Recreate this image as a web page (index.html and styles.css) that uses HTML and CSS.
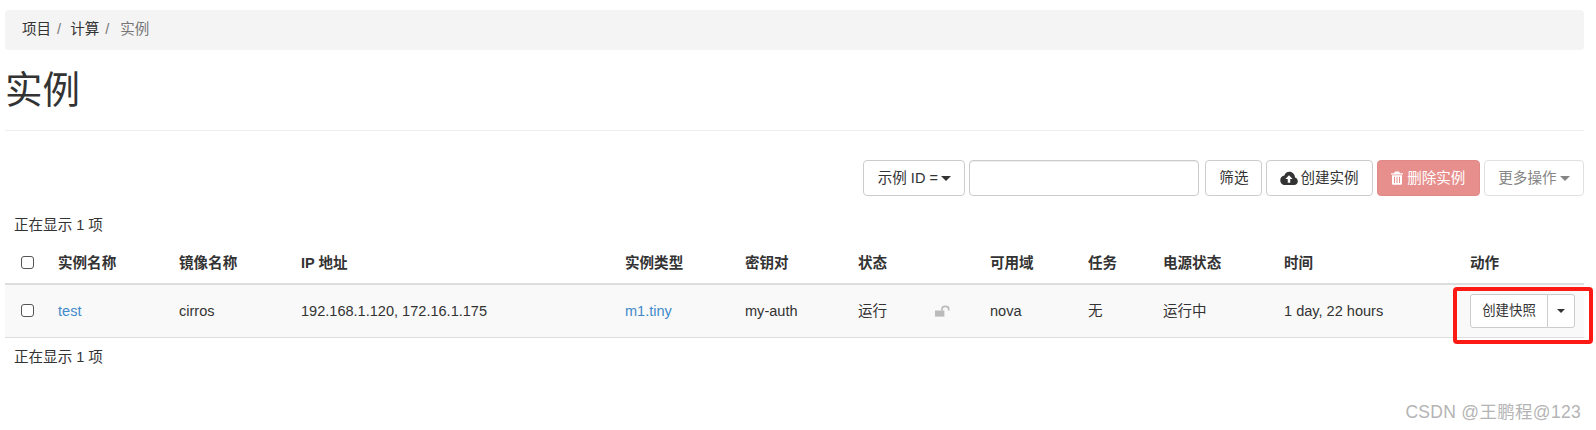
FILE: index.html
```html
<!DOCTYPE html>
<html lang="zh-CN">
<head>
<meta charset="utf-8">
<title>实例</title>
<link rel="stylesheet" href="styles.css">
</head>
<body>
<main class="page">
  <ol class="breadcrumb">
    <li class="crumb">项目<span class="sep">/</span></li>
    <li class="crumb">计算<span class="sep">/</span></li>
    <li class="crumb active">实例</li>
  </ol>
  <h1 class="title">实例</h1>
  <div class="toolbar">
    <button class="btn select-btn">示例 ID =<span class="caret"></span></button>
    <input class="search" type="text" aria-label="filter">
    <button class="btn">筛选</button>
    <button class="btn">
      <svg class="ico" viewBox="0 0 20 16" aria-hidden="true"><path fill="#333" fill-rule="evenodd" d="M10.500 0.500C7.600 0.500 5.500 2.300 4.900 4.800 2.300 5 0.300 7.100 0.300 9.900c0 3 2.300 5.300 5.200 5.300h10.100c2.400 0 4.200-1.900 4.200-4.200 0-2-1.300-3.600-3.100-4.100C16.500 3.300 13.900 0.500 10.500 0.500zM10 4.300l4 4.200h-2.600v4.200H8.600V8.500H6z"/></svg>创建实例
    </button>
    <button class="btn btn-danger">
      <svg class="ico trash" viewBox="0 0 12 14" aria-hidden="true"><path fill="#fff" fill-rule="evenodd" d="M4 0.500h4L9 2.200h3v1.300H0V2.200h3zM1 4.300h10v8.200c0 .8-.6 1.300-1.300 1.300H2.300C1.600 13.800 1 13.300 1 12.500zM3 5.800v6.300h1V5.800zM5.500 5.800v6.300h1V5.800zM8 5.800v6.300h1V5.800z"/></svg>删除实例
    </button>
    <button class="btn btn-off">更多操作<span class="caret"></span></button>
  </div>
  <p class="count count-top">正在显示 1 项</p>
  <table class="grid">
    <thead>
      <tr>
        <th class="c-check"><input type="checkbox" aria-label="all"></th>
        <th class="c-name">实例名称</th>
        <th class="c-image">镜像名称</th>
        <th class="c-ip">IP 地址</th>
        <th class="c-type">实例类型</th>
        <th class="c-key">密钥对</th>
        <th class="c-status">状态</th>
        <th class="c-lock"></th>
        <th class="c-az">可用域</th>
        <th class="c-task">任务</th>
        <th class="c-power">电源状态</th>
        <th class="c-time">时间</th>
        <th class="c-action">动作</th>
      </tr>
    </thead>
    <tbody>
      <tr>
        <td><input type="checkbox" aria-label="test"></td>
        <td><a href="#">test</a></td>
        <td>cirros</td>
        <td>192.168.1.120, 172.16.1.175</td>
        <td><a href="#">m1.tiny</a></td>
        <td>my-auth</td>
        <td>运行</td>
        <td><svg class="lock" viewBox="0 0 16 12" aria-hidden="true"><path fill="#bbb" d="M0 5.500h10v6.500H0z"/><path fill="none" stroke="#bbb" stroke-width="1.800" d="M7.500 5.500V3.600C7.500 2 8.800 1 10.800 1S14.600 2 14.600 3.600V5.500"/></svg></td>
        <td>nova</td>
        <td>无</td>
        <td>运行中</td>
        <td>1 day, 22 hours</td>
        <td>
          <div class="split">
            <button class="split-main">创建快照</button>
            <button class="split-toggle" aria-label="more"><span class="caret"></span></button>
          </div>
        </td>
      </tr>
    </tbody>
  </table>
  <p class="count count-bottom">正在显示 1 项</p>
</main>
<div class="highlight"></div>
<div class="watermark">CSDN @王鹏程@123</div>
</body>
</html>
```

FILE: styles.css
```css
* { box-sizing: border-box; }
html, body { margin: 0; background: #fff; }
body {
  position: relative;
  height: 430px;
  overflow: hidden;
  font-family: "Liberation Sans", "Noto Sans CJK SC", sans-serif;
  font-size: 14.56px;
  line-height: 20px;
  color: #333;
}
.page { padding: 10px 12px 0 5px; }

.breadcrumb {
  display: flex;
  height: 40px;
  margin: 0;
  padding: 9px 0 0 17px;
  list-style: none;
  background: #f4f4f4;
  border-radius: 4px;
  font-size: 14.56px;
}
.crumb { margin-right: 8px; }
.crumb.active { color: #777; margin-left: 2px; }
.sep { margin-left: 6px; margin-right: 1px; color: #777; }

.title {
  margin: 0;
  height: 81px;
  padding-top: 20px;
  border-bottom: 1px solid #eee;
  font-size: 37.5px;
  line-height: 40px;
  font-weight: 400;
}

.toolbar {
  display: flex;
  justify-content: flex-end;
  gap: 4px;
  margin-top: 29px;
  height: 36px;
}
.btn {
  display: inline-flex;
  align-items: center;
  justify-content: center;
  height: 36px;
  padding: 0 13px;
  border: 1px solid #ccc;
  border-radius: 4px;
  background: #fff;
  color: #333;
  font: inherit;
  white-space: nowrap;
}
.select-btn { width: 102px; padding: 0; }
.search {
  width: 230px;
  height: 36px;
  margin-right: 2px;
  padding: 6px 12px;
  border: 1px solid #ccc;
  border-radius: 4px;
  box-shadow: inset 0 1px 1px rgba(0, 0, 0, .075);
  font: inherit;
}
.btn-danger { padding: 0 13.5px; background: #e68f8d; border-color: #e08a88; color: #fff; }
.btn-off { padding: 0 13.5px; color: #858585; border-color: #e0e0e0; }
.btn-off .caret { color: #858585; }
.caret {
  display: inline-block;
  width: 0;
  height: 0;
  margin-left: 3px;
  border-top: 5px solid currentColor;
  border-left: 5px solid transparent;
  border-right: 5px solid transparent;
}
.ico { width: 18px; height: 15px; margin-right: 2px; }
.trash { width: 12px; height: 14px; margin-right: 4px; }

.count { margin: 0; padding-left: 9px; }
.count-top { margin-top: 19px; }
.count-bottom { margin-top: 9px; }

.grid {
  width: 1579px;
  margin-top: 5px;
  border-collapse: collapse;
  table-layout: fixed;
}
.grid th {
  height: 44px;
  padding: 2px 8px 0;
  border-bottom: 2px solid #ddd;
  text-align: left;
  font-weight: 700;
  vertical-align: middle;
}
.grid td {
  height: 53px;
  padding: 0 8px;
  background: #f9f9f9;
  border-bottom: 1px solid #ddd;
  vertical-align: middle;
}
.grid input {
  appearance: none;
  display: block;
  width: 13px;
  height: 13px;
  margin: 0 0 0 8px;
  background: #fff;
  border: 1px solid #555;
  border-radius: 3px;
}
.grid a { color: #428bca; text-decoration: none; }
.c-check { width: 45px; }
.c-name { width: 121px; }
.c-image { width: 122px; }
.c-ip { width: 324px; }
.c-type { width: 120px; }
.c-key { width: 113px; }
.c-status { width: 77px; }
.c-lock { width: 55px; }
.c-az { width: 98px; }
.c-task { width: 75px; }
.c-power { width: 121px; }
.c-time { width: 186px; }
.c-action { width: 122px; }
.lock { display: block; width: 15px; height: 12px; }

.split { display: flex; width: 105px; height: 34px; }
.split-main, .split-toggle {
  border: 1px solid #ccc;
  background: #fff;
  color: #333;
  font: inherit;
  font-size: 13.4px;
  padding: 0;
}
.split-main { width: 78px; border-radius: 3px 0 0 3px; }
.split-toggle { width: 28px; margin-left: -1px; border-radius: 0 3px 3px 0; }
.split-toggle .caret {
  display: block;
  margin: 0 0 0 9px;
  border-top-width: 4px;
  border-left-width: 4.500px;
  border-right-width: 4.500px;
}

.highlight {
  position: absolute;
  left: 1453px;
  top: 287px;
  width: 140px;
  height: 57px;
  border: 4px solid #fd1a14;
  border-radius: 4px;
}
.watermark {
  position: absolute;
  right: 15px;
  top: 401px;
  font-size: 17.500px;
  line-height: 22px;
  letter-spacing: .3px;
  color: #b4b4b4;
}
```
